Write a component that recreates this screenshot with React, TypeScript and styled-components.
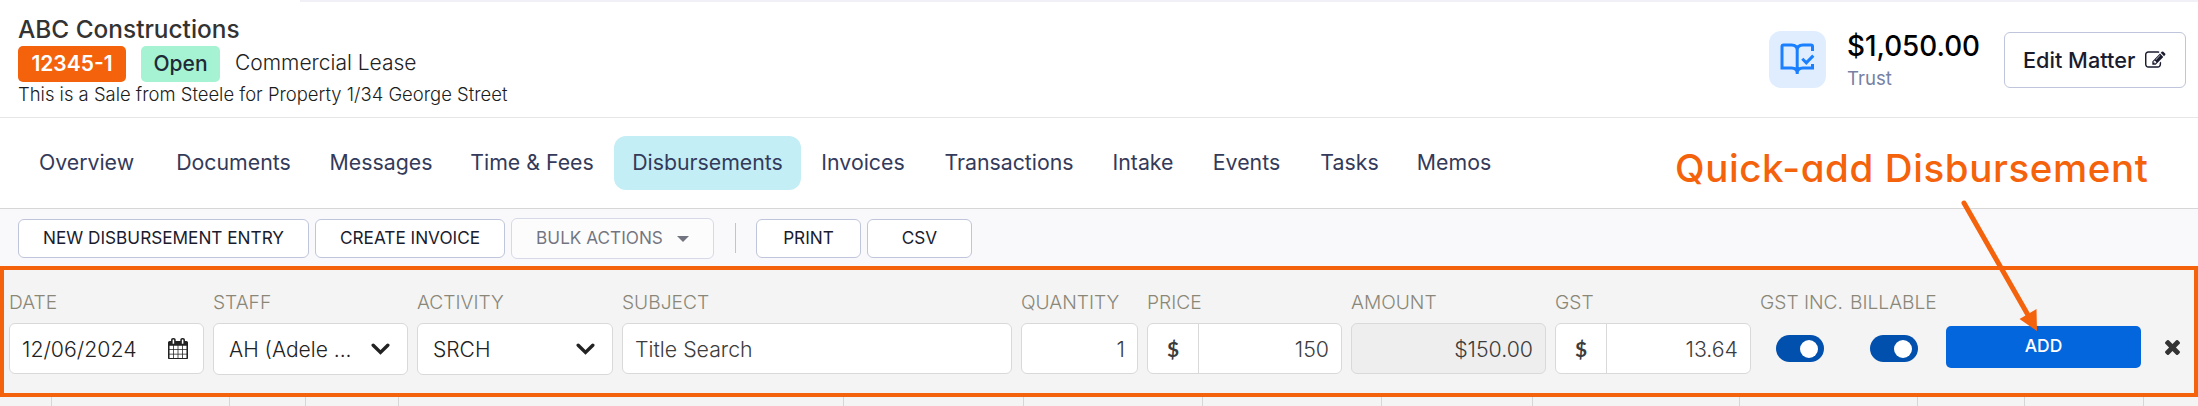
import React from "react";
import styled, { createGlobalStyle } from "styled-components";

const Global = createGlobalStyle`
  * { box-sizing: border-box; }
  body { margin: 0; background: #fff; font-family: Inter, "Liberation Sans", sans-serif; color: #333; overflow: hidden; }
  #root { height: 406px; }
`;

const Fit = styled.span<{ $ls?: number }>`
  white-space: nowrap;
  letter-spacing: ${(p) => p.$ls ?? 0}px;
`;

const Page = styled.div`
  width: 2198px;
  height: 406px;
  display: flex;
  flex-direction: column;
  position: relative;
  overflow: hidden;
`;

const Header = styled.header`
  height: 118px;
  flex: none;
  display: flex;
  justify-content: space-between;
  padding: 16px 12px 0 18px;
  border-bottom: 1px solid #e6e6e6;
  background: linear-gradient(#f0f0f6, #f0f0f6) 300px 0 / 1898px 2px no-repeat #fff;
`;

const MatterInfo = styled.div`
  display: flex;
  flex-direction: column;
`;

const ClientName = styled.div`
  font-size: 24.4px;
  font-weight: 500;
  line-height: 26px;
  height: 30px;
`;

const MatterRow = styled.div`
  display: flex;
  height: 36px;
  align-items: center;
  font-size: 21px;
  font-weight: 300;
`;

const Badge = styled.span<{ $bg: string; $fg: string; $w: number; $weight: number }>`
  width: ${(p) => p.$w}px;
  height: 36px;
  line-height: 35px;
  margin-right: 15px;
  text-align: center;
  border-radius: 5px;
  background: ${(p) => p.$bg};
  color: ${(p) => p.$fg};
  font-weight: ${(p) => p.$weight};
`;

const MatterType = styled.span`
  line-height: 36px;
  height: 37px;
  margin-top: -1px;
  white-space: nowrap;
  color: #222;
`;

const Description = styled.div`
  font-size: 18.45px;
  font-weight: 300;
  line-height: 25px;
  color: #1c1c1c;
`;

const HeaderRight = styled.div`
  display: flex;
`;

const BookTile = styled.div`
  width: 57px;
  height: 57px;
  margin-top: 15px;
  border-radius: 12px;
  background: #e0edff;
  display: grid;
  place-items: center;
`;

const Balance = styled.div`
  width: 157px;
  margin-left: 21px;
  padding-top: 13px;
`;

const Amount = styled.div`
  font-size: 27.8px;
  font-weight: 500;
  line-height: 34px;
  color: #000;
`;

const TrustLabel = styled.div`
  font-size: 18.6px;
  line-height: 31px;
  color: #7681a5;
`;

const EditButton = styled.button`
  width: 182px;
  height: 56px;
  margin-top: 16px;
  padding: 0 0 1px 18px;
  display: flex;
  align-items: center;
  gap: 10px;
  border: 1px solid #bfc5da;
  border-radius: 6px;
  background: #fff;
  color: #1a1c2e;
  font: 500 21.7px Inter, sans-serif;
`;

const Nav = styled.nav`
  height: 91px;
  flex: none;
  display: flex;
  align-items: center;
  gap: 4px;
  padding: 0 0 0 18px;
  border-bottom: 1px solid #d6d6d6;
`;

const Tab = styled.a<{ $active?: boolean; $w: number }>`
  width: ${(p) => p.$w}px;
  height: 54px;
  line-height: 53px;
  text-align: center;
  border-radius: 12px;
  font-size: 21.3px;
  font-weight: 400;
  color: #343a59;
  background: ${(p) => (p.$active ? "#c3eef5" : "transparent")};
`;

const Toolbar = styled.div`
  height: 57px;
  flex: none;
  display: flex;
  gap: 6px;
  align-items: flex-start;
  padding: 9px 0 0 18px;
  background: #f9f9fc;
`;

const ToolButton = styled.button<{ $w: number; $muted?: boolean }>`
  width: ${(p) => p.$w}px;
  height: ${(p) => (p.$muted ? 41 : 39)}px;
  margin-top: ${(p) => (p.$muted ? 0 : 1)}px;
  padding: 0 0 2px;
  display: flex;
  align-items: center;
  justify-content: center;
  gap: 14px;
  border: 1px solid #bfc5da;
  border-radius: 6px;
  background: #fff;
  color: #1a1c2e;
  font: 400 17.2px Inter, sans-serif;
  opacity: ${(p) => (p.$muted ? 0.6 : 1)};
  svg { margin-top: 3px; }
`;

const ToolDivider = styled.i`
  width: 1px;
  height: 30px;
  margin: 5px 14px 0 15px;
  background: #c4c4c8;
`;

const QuickAdd = styled.section`
  height: 131px;
  flex: none;
  display: flex;
  padding: 20px 0 0 5px;
  border: 4px solid #f5620c;
  background: #f4f4f4;
`;

const Field = styled.div<{ $w: number }>`
  width: ${(p) => p.$w}px;
  margin-right: 9px;
  flex: none;
`;

const Label = styled.div`
  height: 33px;
  line-height: 25px;
  font-size: 19.2px;
  font-weight: 300;
  color: #8a8778;
  white-space: nowrap;
`;

const Box = styled.div<{ $h?: number; $disabled?: boolean; $right?: boolean }>`
  height: ${(p) => p.$h ?? 51}px;
  display: flex;
  align-items: center;
  justify-content: ${(p) => (p.$right ? "flex-end" : "space-between")};
  padding: 0 12px;
  border: 1px solid #d9d9d9;
  border-radius: 6px;
  background: ${(p) => (p.$disabled ? "#eeeeee" : "#fff")};
  color: #3c3c3c;
  font-size: 21.3px;
  font-weight: 300;
`;

const DateBox = styled(Box)`
  padding-right: 15px;
  color: #222;
`;

const Choice = styled(Box)`
  padding: 0 17px 0 15px;
  color: #222;
  font-size: 21px;
`;

const Currency = styled.span`
  width: 51px;
  height: 49px;
  margin: 0 auto 0 -12px;
  display: grid;
  place-items: center;
  border-right: 1px solid #d9d9d9;
  font: 700 21px Lato, sans-serif;
`;

const Switch = styled.div<{ $inset: number }>`
  width: 48px;
  height: 27px;
  margin: 12px 0 0 ${(p) => p.$inset}px;
  padding: 5px 6px;
  display: flex;
  justify-content: flex-end;
  border-radius: 14px;
  background: #0250ad;
  &::after { content: ""; width: 18px; height: 18px; border-radius: 50%; background: #fff; }
`;

const AddButton = styled.button`
  width: 195px;
  height: 42px;
  margin: 36px 0 0 1px;
  padding: 0 0 3px;
  border: 0;
  border-radius: 5px;
  background: #0466dd;
  color: #fff;
  font: 500 17.4px Inter, sans-serif;
`;

const Close = styled.svg`
  margin: 50px 0 0 24px;
`;

const Rows = styled.div`
  height: 9px;
  display: flex;
  background: #f4f4f4;
`;

const Cell = styled.div<{ $w: number }>`
  width: ${(p) => p.$w}px;
  border-right: 1px solid #d6d6d6;
`;

const Callout = styled.div`
  position: absolute;
  left: 1675px;
  top: 144px;
  font: 500 38.5px/48px Inter, sans-serif;
  font-feature-settings: "cv11";
  color: #f5620c;
  white-space: nowrap;
`;

const Arrow = styled.svg`
  position: absolute;
  left: 1950px;
  top: 190px;
`;

const Chevron = () => (
  <svg width="19" height="12" viewBox="0 0 19 12">
    <path d="M2.2 2.2l7.3 7.2 7.3-7.2" fill="none" stroke="#222" strokeWidth="3.4" strokeLinecap="round" />
  </svg>
);

const Calendar = () => (
  <svg width="20" height="21.5" viewBox="64 0 1664 1792" preserveAspectRatio="none" fill="#222">
    <path d="M192 1664h288v-288h-288v288zm352 0h320v-288h-320v288zm-352-352h288v-320h-288v320zm352 0h320v-320h-320v320zm-352-384h288v-288h-288v288zm736 736h320v-288h-320v288zm-384-736h320v-288h-320v288zm768 736h288v-288h-288v288zm-384-352h320v-320h-320v320zm-352-864v-288q0-13-9.500-22.500t-22.500-9.500h-64q-13 0-22.500 9.500t-9.500 22.500v288q0 13 9.500 22.500t22.500 9.500h64q13 0 22.500-9.500t9.500-22.500zm736 864h288v-320h-288v320zm-384-384h320v-288h-320v288zm384 0h288v-288h-288v288zm32-480v-288q0-13-9.500-22.500t-22.500-9.500h-64q-13 0-22.500 9.500t-9.500 22.500v288q0 13 9.500 22.500t22.500 9.500h64q13 0 22.500-9.500t9.500-22.500zm384-64v1280q0 52-38 90t-90 38h-1408q-52 0-90-38t-38-90v-1280q0-52 38-90t90-38h128v-96q0-66 47-113t113-47h64q66 0 113 47t47 113v96h384v-96q0-66 47-113t113-47h64q66 0 113 47t47 113v96h128q52 0 90 38t38 90z" />
  </svg>
);

const Pencil = () => (
  <svg width="20.5" height="17" viewBox="0 100 1792 1460" preserveAspectRatio="none" fill="#1a1c2e">
    <path d="M888 1184l116-116-152-152-116 116v56h96v96h56zm440-720q-16-16-33 1l-350 350q-17 17-1 33t33-1l350-350q17-17 1-33zm80 594v190q0 119-84.500 203.500t-203.500 84.500h-832q-119 0-203.500-84.500t-84.500-203.500v-832q0-119 84.500-203.500t203.500-84.500h832q63 0 117 25 15 7 18 23 3 17-9 29l-49 49q-14 14-32 8-23-6-45-6h-832q-66 0-113 47t-47 113v832q0 66 47 113t113 47h832q66 0 113-47t47-113v-126q0-13 9-22l64-64q15-15 35-7t20 29zm-96-738l288 288-672 672h-288v-288zm444 132l-92 92-288-288 92-92q28-28 68-28t68 28l152 152q28 28 28 68t-28 68z" />
  </svg>
);

const Book = () => (
  <svg width="35" height="33" viewBox="0 0 35 33" fill="none" stroke="#1a80ff" strokeWidth="3">
    <path d="M17.200 31V6.500M32.500 8V3.500q0-1.500-1.500-1.500H23q-5.800 0-5.800 5Q17.200 2 11.500 2H3.500Q2 2 2 3.500V25h9.500q5.700 0 5.700 5 0-5 5.800-5h9.500V21M22.300 15.800l4 4 7-7.200" />
  </svg>
);

const tabs: [string, number][] = [
  ["Overview", 137], ["Documents", 149], ["Messages", 138], ["Time & Fees", 156], ["Disbursements", 187],
  ["Invoices", 116], ["Transactions", 168], ["Intake", 92], ["Events", 107], ["Tasks", 91], ["Memos", 110],
];

const cells = [52, 178, 76, 93, 445, 180, 179, 179, 151, 207, 178, 107, 119];

export default function App() {
  return (
    <Page>
      <Global />
      <Header>
        <MatterInfo>
          <ClientName><Fit>ABC Constructions</Fit></ClientName>
          <MatterRow>
            <Badge $bg="#f5620c" $fg="#fff" $w={108} $weight={600}><Fit>12345-1</Fit></Badge>
            <Badge $bg="#a5f3d3" $fg="#1f2937" $w={79} $weight={500}><Fit>Open</Fit></Badge>
            <MatterType>Commercial Lease</MatterType>
          </MatterRow>
          <Description><Fit>This is a Sale from Steele for Property 1/34 George Street</Fit></Description>
        </MatterInfo>
        <HeaderRight>
          <BookTile><Book /></BookTile>
          <Balance>
            <Amount><Fit>$1,050.00</Fit></Amount>
            <TrustLabel><Fit>Trust</Fit></TrustLabel>
          </Balance>
          <EditButton>
            <Fit>Edit Matter</Fit>
            <Pencil />
          </EditButton>
        </HeaderRight>
      </Header>
      <Nav>
        {tabs.map(([name, w]) => (
          <Tab key={name} $w={w} $active={name === "Disbursements"}><Fit>{name}</Fit></Tab>
        ))}
      </Nav>
      <Toolbar>
        <ToolButton $w={291}><Fit>NEW DISBURSEMENT ENTRY</Fit></ToolButton>
        <ToolButton $w={190}><Fit>CREATE INVOICE</Fit></ToolButton>
        <ToolButton $w={203} $muted>
          <Fit>BULK ACTIONS</Fit>
          <svg width="12" height="6"><path d="M0 0h12L6 6z" fill="#1a1c2e" /></svg>
        </ToolButton>
        <ToolDivider />
        <ToolButton $w={105}><Fit>PRINT</Fit></ToolButton>
        <ToolButton $w={105}><Fit>CSV</Fit></ToolButton>
      </Toolbar>
      <QuickAdd>
        <Field $w={195}><Label>DATE</Label><DateBox><Fit>12/06/2024</Fit><Calendar /></DateBox></Field>
        <Field $w={195}><Label>STAFF</Label><Choice $h={52}><Fit>AH (Adele ...</Fit><Chevron /></Choice></Field>
        <Field $w={196}><Label>ACTIVITY</Label><Choice $h={52}><Fit>SRCH</Fit><Chevron /></Choice></Field>
        <Field $w={390}><Label>SUBJECT</Label><Box><Fit>Title Search</Fit></Box></Field>
        <Field $w={117}><Label>QUANTITY</Label><Box $right>1</Box></Field>
        <Field $w={195}><Label>PRICE</Label><Box $right><Currency>$</Currency><Fit>150</Fit></Box></Field>
        <Field $w={195}><Label>AMOUNT</Label><Box $right $disabled><Fit>$150.00</Fit></Box></Field>
        <Field $w={196}><Label>GST</Label><Box $right><Currency>$</Currency><Fit>13.64</Fit></Box></Field>
        <Field $w={81}><Label>GST INC.</Label><Switch $inset={16} /></Field>
        <Field $w={86}><Label>BILLABLE</Label><Switch $inset={20} /></Field>
        <AddButton><Fit>ADD</Fit></AddButton>
        <Close width="15" height="15" viewBox="302 366 1188 1188" fill="#333">
          <path d="M1490 1322q0 40-28 68l-136 136q-28 28-68 28t-68-28l-294-294-294 294q-28 28-68 28t-68-28l-136-136q-28-28-28-68t28-68l294-294-294-294q-28-28-28-68t28-68l136-136q28-28 68-28t68 28l294 294 294-294q28-28 68-28t68 28l136 136q28 28 28 68t-28 68l-294 294 294 294q28 28 28 68z" />
        </Close>
      </QuickAdd>
      <Rows>{cells.map((w, i) => <Cell key={i} $w={w} />)}</Rows>
      <Callout><Fit $ls={0.6}>Quick-add Disbursement</Fit></Callout>
      <Arrow width="110" height="145">
        <path d="M14 13L78 125" stroke="#f5620c" strokeWidth="5" strokeLinecap="round" />
        <path d="M87 141L69.500 129 86.500 119z" fill="#f5620c" />
      </Arrow>
    </Page>
  );
}
